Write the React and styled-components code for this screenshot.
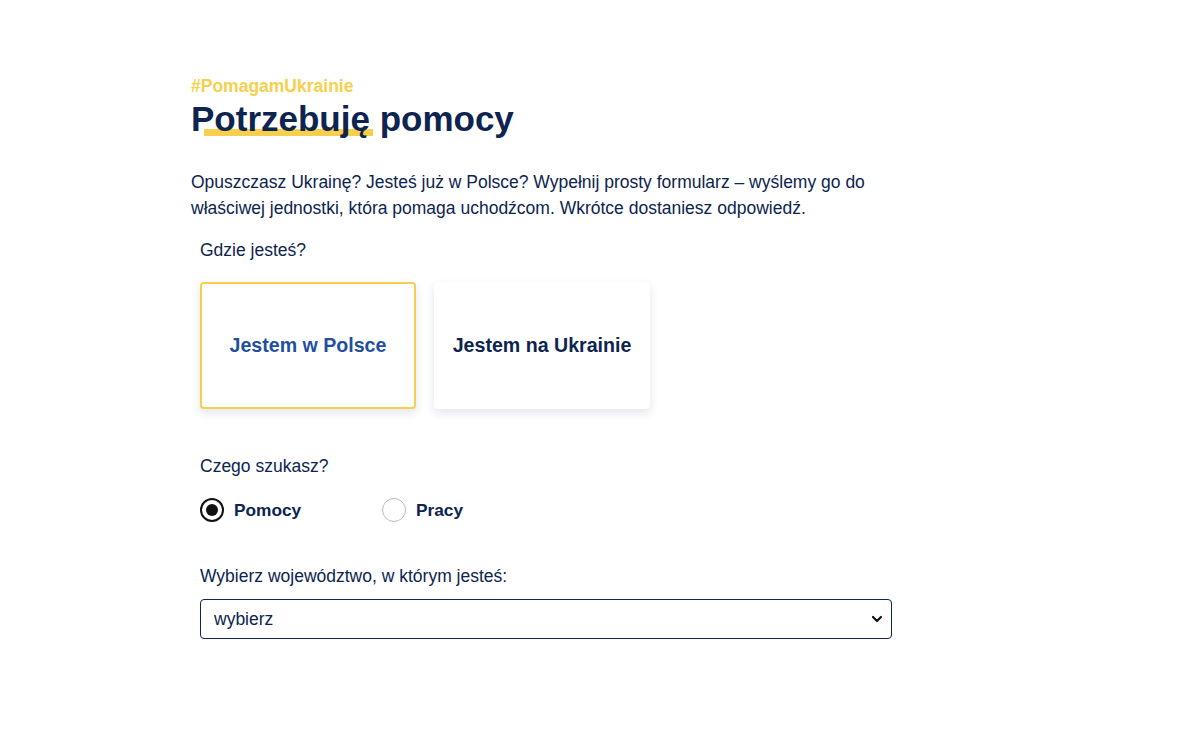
import React, { useState } from 'react'
import styled, { createGlobalStyle } from 'styled-components'

const GlobalStyle = createGlobalStyle`
  body {
    margin: 0;
    background: #fff;
    font-family: "Liberation Sans", Arial, sans-serif;
    color: #0d2450;
  }
`

const Page = styled.main`
  padding: 76px 0 0 191px;
  width: 710px;
`

const Tag = styled.div`
  color: #f6d04d;
  font-weight: 700;
  font-size: 17.5px;
  line-height: 20px;
`

const Title = styled.h1`
  margin: 0;
  font-size: 35px;
  line-height: 46px;
  font-weight: 700;
  color: #0d2450;
  position: relative;
  display: inline-block;
  span {
    position: relative;
    z-index: 1;
  }
  &::before {
    content: '';
    position: absolute;
    left: 13px;
    width: 169px;
    top: 33px;
    height: 7px;
    background: #f6d04d;
    z-index: 0;
  }
`

const Lead = styled.p`
  margin: 27px 0 0;
  font-size: 17.5px;
  line-height: 26px;
  max-width: 700px;
`

const Section = styled.div`
  padding-left: 9px;
`

const Label = styled.div`
  font-size: 17.5px;
  line-height: 20px;
  margin-top: ${p => p.$top}px;
`

const Cards = styled.div`
  display: flex;
  gap: 18px;
  margin-top: 22px;
`

const Card = styled.button`
  width: 216px;
  height: 127px;
  box-sizing: border-box;
  border-radius: 4px;
  background: #fff;
  border: 2px solid ${p => (p.$active ? '#f6d04d' : 'transparent')};
  box-shadow: 0 4px 10px rgba(20, 40, 90, 0.12);
  font-family: inherit;
  font-weight: 700;
  font-size: 19.6px;
  color: ${p => (p.$active ? '#1f4f9e' : '#0d2450')};
  cursor: pointer;
`

const Radios = styled.div`
  display: flex;
  margin-top: 22px;
`

const RadioItem = styled.label`
  display: flex;
  align-items: center;
  gap: 10px;
  width: 182px;
  font-weight: 700;
  font-size: 17.3px;
  cursor: pointer;
`

const Circle = styled.span`
  width: 24px;
  height: 24px;
  box-sizing: border-box;
  border-radius: 50%;
  border: ${p => (p.$on ? '2px solid #111' : '1px solid #b9b9b9')};
  display: flex;
  align-items: center;
  justify-content: center;
  &::after {
    content: '';
    width: 12px;
    height: 12px;
    border-radius: 50%;
    background: #111;
    display: ${p => (p.$on ? 'block' : 'none')};
  }
`

const SelectBox = styled.div`
  margin-top: 13px;
  width: 692px;
  height: 40px;
  box-sizing: border-box;
  border: 1px solid #0d2450;
  border-radius: 4px;
  display: flex;
  align-items: center;
  justify-content: space-between;
  padding: 0 8px 0 13px;
  font-size: 17.5px;
  color: #0d2450;
`

const Chevron = () => (
  <svg width="12" height="8" viewBox="0 0 12 8">
    <path d="M2 2l4 4 4-4" fill="none" stroke="#111" strokeWidth="2.2" strokeLinecap="round" strokeLinejoin="round" />
  </svg>
)

export default function App() {
  const [where, setWhere] = useState('pl')
  const [what, setWhat] = useState('help')
  return (
    <>
      <GlobalStyle />
      <Page>
        <Tag>#PomagamUkrainie</Tag>
        <Title><span>Potrzebuję pomocy</span></Title>
        <Lead>
          Opuszczasz Ukrainę? Jesteś już w Polsce? Wypełnij prosty formularz – wyślemy go do
          właściwej jednostki, która pomaga uchodźcom. Wkrótce dostaniesz odpowiedź.
        </Lead>
        <Section>
          <Label $top={19}>Gdzie jesteś?</Label>
          <Cards>
            <Card $active={where === 'pl'} onClick={() => setWhere('pl')}>Jestem w Polsce</Card>
            <Card $active={where === 'ua'} onClick={() => setWhere('ua')}>Jestem na Ukrainie</Card>
          </Cards>
          <Label $top={47}>Czego szukasz?</Label>
          <Radios>
            <RadioItem onClick={() => setWhat('help')}>
              <Circle $on={what === 'help'} />Pomocy
            </RadioItem>
            <RadioItem onClick={() => setWhat('work')}>
              <Circle $on={what === 'work'} />Pracy
            </RadioItem>
          </Radios>
          <Label $top={44}>Wybierz województwo, w którym jesteś:</Label>
          <SelectBox>
            <span>wybierz</span>
            <Chevron />
          </SelectBox>
        </Section>
      </Page>
    </>
  )
}
